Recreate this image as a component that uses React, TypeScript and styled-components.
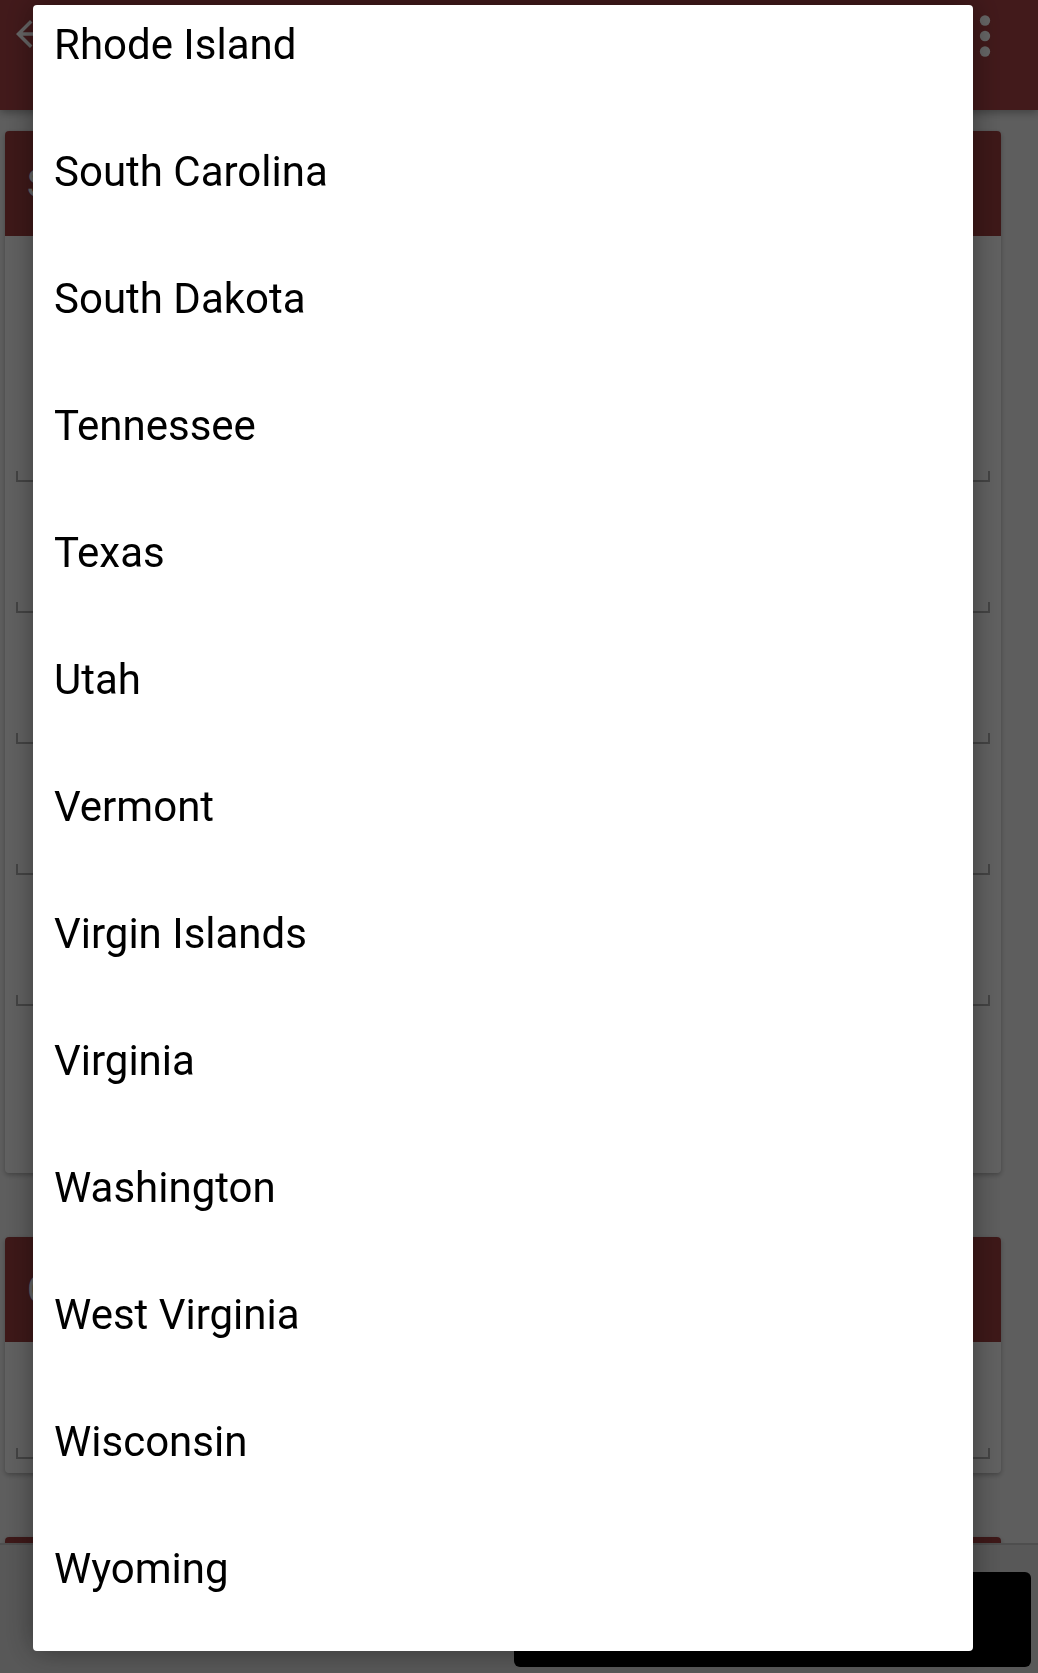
import styled, { createGlobalStyle } from "styled-components";

const GlobalStyle = createGlobalStyle`
  html, body {
    margin: 0;
    padding: 0;
  }
  body {
    background: #ebebeb;
    font-family: Roboto, "Noto Sans", "Liberation Sans", sans-serif;
    overflow: hidden;
  }
`;

const Page = styled.div`
  min-height: 100vh;
`;

const AppBar = styled.header`
  position: relative;
  z-index: 1;
  height: 110px;
  display: flex;
  justify-content: space-between;
  align-items: flex-start;
  padding: 0 22px 0 9px;
  background: #a54144;
  box-shadow: 0 3px 8px rgba(0, 0, 0, 0.3);
`;

const IconButton = styled.button<{ $top: number }>`
  margin-top: ${(p) => p.$top}px;
  padding: 0;
  border: none;
  background: none;
  display: flex;
  color: #ffffff;
`;

const Content = styled.main`
  display: flex;
  flex-direction: column;
  gap: 64px;
  padding: 21px 37px 0 5px;
`;

const Card = styled.section`
  border-radius: 4px;
  overflow: hidden;
  background: #f3f3f3;
  box-shadow: 0 2px 5px rgba(0, 0, 0, 0.28);
`;

const CardHeader = styled.h2`
  margin: 0;
  height: 105px;
  display: flex;
  align-items: center;
  padding-left: 22px;
  background: #9b3e3e;
  color: #ffffff;
  font-size: 38px;
  font-weight: 400;
`;

const CardBody = styled.div<{ $top: number; $bottom: number }>`
  padding: ${(p) => p.$top}px 0 ${(p) => p.$bottom}px;
`;

const Field = styled.div<{ $h: number }>`
  height: ${(p) => p.$h}px;
  display: flex;
  align-items: flex-end;
  padding: 0 11px;
`;

const Underline = styled.div`
  flex: 1;
  height: 9px;
  border: 2px solid #aaaaaa;
  border-top: none;
`;

const BottomBar = styled.footer`
  position: fixed;
  left: 0;
  right: 0;
  bottom: 0;
  z-index: 5;
  height: 128px;
  background: #dcdcdc;
  border-top: 2px solid #c2c2c2;
`;

const Toast = styled.div`
  position: fixed;
  right: 7px;
  bottom: 6px;
  z-index: 6;
  width: 517px;
  height: 95px;
  border-radius: 6px;
  background: #000000;
`;

const Scrim = styled.div`
  position: fixed;
  inset: 0;
  z-index: 10;
  background: rgba(0, 0, 0, 0.6);
`;

const Dialog = styled.div`
  position: fixed;
  top: 5px;
  left: 33px;
  z-index: 11;
  width: 940px;
  height: 1646px;
  overflow: hidden;
  border-radius: 4px;
  background: #ffffff;
  box-shadow: 0 0 30px rgba(0, 0, 0, 0.4);
`;

const OptionList = styled.ul`
  list-style: none;
  margin: -24px 0 0;
  padding: 0;
`;

const Option = styled.li`
  height: 127px;
  display: flex;
  align-items: center;
  padding-left: 21px;
  font-size: 42px;
  color: #000000;
`;

const states = [
  "Rhode Island",
  "South Carolina",
  "South Dakota",
  "Tennessee",
  "Texas",
  "Utah",
  "Vermont",
  "Virgin Islands",
  "Virginia",
  "Washington",
  "West Virginia",
  "Wisconsin",
  "Wyoming",
];

function BackArrow() {
  return (
    <svg width="42" height="42" viewBox="0 0 24 24" fill="currentColor">
      <path d="M20 11H7.83l5.59-5.59L12 4l-8 8 8 8 1.41-1.41L7.83 13H20v-2z" />
    </svg>
  );
}

function MoreVert() {
  return (
    <svg width="62" height="62" viewBox="0 0 24 24" fill="currentColor">
      <circle cx="12" cy="6" r="2" />
      <circle cx="12" cy="12" r="2" />
      <circle cx="12" cy="18" r="2" />
    </svg>
  );
}

export default function App() {
  return (
    <Page>
      <GlobalStyle />
      <AppBar>
        <IconButton $top={13}>
          <BackArrow />
        </IconButton>
        <IconButton $top={5}>
          <MoreVert />
        </IconButton>
      </AppBar>
      <Content>
        <Card>
          <CardHeader>Shipping Address</CardHeader>
          <CardBody $top={115} $bottom={167}>
            {[0, 1, 2, 3, 4].map((i) => (
              <Field key={i} $h={131}>
                <Underline />
              </Field>
            ))}
          </CardBody>
        </Card>
        <Card>
          <CardHeader>Contact</CardHeader>
          <CardBody $top={0} $bottom={14}>
            <Field $h={117}>
              <Underline />
            </Field>
          </CardBody>
        </Card>
        <Card>
          <CardHeader>Payment</CardHeader>
        </Card>
      </Content>
      <BottomBar />
      <Toast />
      <Scrim />
      <Dialog>
        <OptionList>
          {states.map((s) => (
            <Option key={s}>{s}</Option>
          ))}
        </OptionList>
      </Dialog>
    </Page>
  );
}
